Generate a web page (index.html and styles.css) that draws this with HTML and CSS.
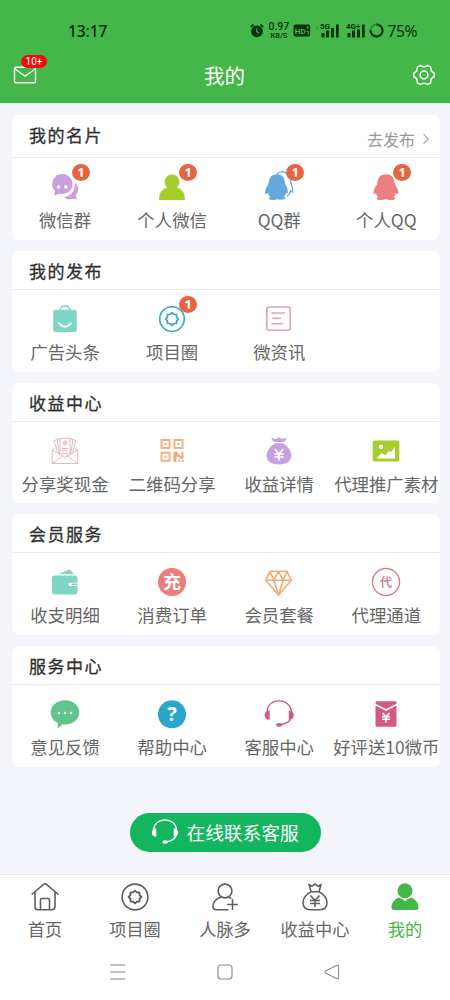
FILE: index.html
```html
<!DOCTYPE html>
<html lang="zh-CN">
<head>
<meta charset="utf-8">
<title>我的</title>
<link rel="stylesheet" href="styles.css">
</head>
<body>
<header class="header">
  <div class="status">
    <span class="time">13:17</span>
    <div class="status-right">
      <svg class="alarm" width="14" height="15" viewBox="0 0 14 15"><circle cx="7" cy="8.4" r="5.9" fill="#06350b"/><path d="M.9 3.900 3.600 1.500M13.100 3.900 10.400 1.500" stroke="#06350b" stroke-width="1.700"/><path d="M6.800 5.500v3l2 1.600" fill="none" stroke="#45b649" stroke-width="1.200"/></svg>
      <span class="speed"><b>0.97</b><b class="unit">KB/S</b></span>
      <svg class="hd" width="18" height="13" viewBox="0 0 18 13"><rect x=".5" y=".5" width="16.600" height="12" rx="1.800" fill="#06350b"/><text x="1.800" y="9.600" class="hd-text">HD</text><path d="M14.700 2v3M13.700 7.500h1.500v3" stroke="#45b649" fill="none"/></svg>
      <svg class="sig5" width="24" height="17" viewBox="0 0 24 17"><text x="4" y="7" class="net-text">5G</text><path d="M1 4v3" stroke="#2c8d31"/><g fill="#06350b"><rect x="5.500" y="11" width="3" height="4.500"/><rect x="10" y="8.500" width="3" height="7"/><rect x="15" y="6" width="3" height="9.500"/><rect x="20" y="2.500" width="2.700" height="13"/></g></svg>
      <svg class="sig4" width="20" height="17" viewBox="0 0 20 17"><text x="0" y="7" class="net-text">4G+</text><g fill="#06350b"><rect x="1.500" y="11" width="3" height="4.500"/><rect x="6" y="8.500" width="3" height="7"/><rect x="11" y="7.500" width="3" height="8"/><rect x="16" y="2.500" width="2.700" height="13"/></g></svg>
      <svg class="ring" width="15" height="15" viewBox="0 0 15 15" fill="none" stroke-width="2"><circle cx="7.500" cy="7.500" r="6" stroke="#2a8b30"/><path d="M7.500 1.500a6 6 0 1 1-6 6" stroke="#06350b"/></svg>
      <span class="battery">75%</span>
    </div>
  </div>
  <div class="titlebar">
    <div class="mail">
      <svg width="24" height="20" viewBox="0 0 24 20" fill="none" stroke="#f3fff3" stroke-width="1.400" stroke-linejoin="round"><rect x="1.500" y="2.300" width="21" height="15.500" rx="1.500"/><path d="m2 4 10 7.300L22 4"/></svg>
      <span class="mail-badge">10+</span>
    </div>
    <h1>我的</h1>
    <svg class="gear" width="24" height="24" viewBox="0 0 24 24" fill="none" stroke="#f3fff3" stroke-width="1.500" stroke-linejoin="round"><path d="M8.500 2.300q3.500 2.800 7 0l3.300 1.900q-.7 4.400 3.500 6v3.600q-4.200 1.600-3.500 6l-3.300 1.900q-3.500-2.800-7 0l-3.300-1.900q.7-4.400-3.500-6v-3.600q4.200-1.600 3.500-6z"/><circle cx="12" cy="12" r="3.900"/></svg>
  </div>
</header>

<main class="main">
  <section class="card card-first">
    <div class="head"><h2>我的名片</h2><a class="more">去发布<svg width="8" height="12" viewBox="0 0 8 12" fill="none" stroke="#aaa" stroke-width="1.100"><path d="m1.500 1 4.700 5-4.700 5"/></svg></a></div>
    <div class="row">
      <div class="item"><div class="icon"><svg viewBox="0 0 28 28"><path d="M24.300 9.500c4 4.500 3.400 9.500.4 12.500l1.300 4.600-4.200-.8c-3.300 1-6.800.5-9-1.800 5.800-.3 11.500-5 11.500-14.500z" fill="#c9a0df"/><path d="M11.800 1a10.300 10 0 1 1-3 19.700L3 22.500l1.200-4.400A10.300 10 0 0 1 11.800 1z" fill="#c9a0df"/><circle cx="7.600" cy="14" r="1.700" fill="#fff"/><circle cx="14.800" cy="14" r="1.700" fill="#fff"/></svg><i class="badge">1</i></div><span>微信群</span></div>
      <div class="item"><div class="icon"><svg viewBox="0 0 28 28" fill="#a5cd2b"><path d="M14 1.500a7.300 7.300 0 0 1 4.600 13c5.500 1.300 8.400 5.500 8.400 12.500H1c0-7 3-11.200 8.500-12.500A7.300 7.300 0 0 1 14 1.500z"/></svg><i class="badge">1</i></div><span>个人微信</span></div>
      <div class="item"><div class="icon"><svg viewBox="0 0 28 28"><path d="M12 1c5-5 13-1 13.600 7.300.4 4 2.600 6.200 2 10.700l-2-1c-.5 3-1.500 4-3.600 5" fill="none" stroke="#67a8dc" stroke-width="1.300"/><path d="M12 1.300c5.800 0 7.700 4 8 9.200 2 3.300 3.500 6.700 2.600 10.300l-1.400-1c-.3 1.600-1 2.800-2.300 3.900 2 1 1.500 2.700-1 2.900-2.300.2-4 .2-5.500-.3-1.600.5-4 .8-6.300.5-2.600-.3-2.700-2-.8-2.900-1.200-1-2-2.200-2.300-3.800L.4 21.300c-1-3.700 1.200-7.300 3.200-10.800C4 5 6.200 1.300 12 1.300z" fill="#67a8dc"/></svg><i class="badge">1</i></div><span>QQ群</span></div>
      <div class="item"><div class="icon"><svg viewBox="0 0 28 28"><path d="M14 1.300c6 0 8.300 4 8.700 9.500 2 3.300 4.400 6.800 3.400 10.500l-2.300-1c-.3 1.400-1 2.500-2.200 3.400 2.300 1 2.200 3-.6 3.200-2.700.3-5 .1-7-1-2 .9-4.400 1.300-7 1-2.800-.3-2.900-2.200-.6-3.200-1.200-.9-2-2-2.300-3.400l-2.300 1c-1-3.700 1.500-7.200 3.500-10.500C5.700 5.300 8 1.300 14 1.300z" fill="#ee7f80"/></svg><i class="badge">1</i></div><span>个人QQ</span></div>
    </div>
  </section>

  <section class="card">
    <div class="head"><h2>我的发布</h2></div>
    <div class="row">
      <div class="item"><div class="icon"><svg viewBox="0 0 28 28"><path d="M9.300 6V5q0-4 4.700-4t4.700 4v1" fill="none" stroke="#7fd6c5" stroke-width="1.600"/><rect x="2.200" y="4.800" width="23.600" height="22.200" rx="2" fill="#7fd6c5"/><path d="M8 18.300q6 6.500 12 0" fill="none" stroke="#fff" stroke-width="1.800" stroke-linecap="round"/></svg></div><span>广告头条</span></div>
      <div class="item"><div class="icon"><svg viewBox="0 0 28 28" fill="none" stroke="#35a5c8"><circle cx="14" cy="14" r="12.300" stroke-width="1.600"/><path d="m14 7.600 1.900 1.800 2.600.1.100 2.600 1.800 1.900-1.800 1.900-.1 2.600-2.600.1-1.900 1.800-1.900-1.800-2.600-.1-.1-2.600L7.600 14l1.800-1.900.1-2.600 2.600-.1z" stroke-width="1.700" stroke-linejoin="round"/></svg><i class="badge">1</i></div><span>项目圈</span></div>
      <div class="item"><div class="icon"><svg viewBox="0 0 28 28" fill="none" stroke="#e8a1bd" stroke-width="1.600"><rect x="1.800" y="2" width="23.400" height="23.200" rx="2.500"/><path d="M7 8h12.500M8 13.200h7.500M7 18.700h10.500" stroke-linecap="round"/></svg></div><span>微资讯</span></div>
    </div>
  </section>

  <section class="card">
    <div class="head"><h2>收益中心</h2></div>
    <div class="row">
      <div class="item"><div class="icon"><svg viewBox="0 0 28 28" fill="#fff" stroke="#e3b1b5" stroke-width=".9"><path d="m3 3.500 5.500-1.500 4 15-6-2zM25 3.500l-5.500-1.500-4 15 6-2z"/><path d="m6 2.500 4-1 3 15-5-2zM22 2.500l-4-1-3 15 5-2z"/><rect x="9" y="1.300" width="10" height="15.500"/><circle cx="14" cy="6" r="2"/><path d="M12.300 6h3.400M14 4.500v3M11 11.500h6M11 15l3-2.300 3 2.300" fill="none"/><path d="m1.200 13 12.800 7.500L26.800 13v13.500H1.200z"/><path d="m1.200 26.500 10.300-7.500M26.800 26.500l-10.300-7.500M1.200 13 4 11M26.800 13 24 11" fill="none"/></svg></div><span>分享奖现金</span></div>
      <div class="item"><div class="icon"><svg viewBox="0 0 28 28"><g fill="none" stroke="#f2b27f" stroke-width="2"><rect x="3.500" y="3" width="8" height="8"/><rect x="16.500" y="3" width="8" height="8"/><rect x="3.500" y="15.800" width="8" height="8"/></g><path d="M6.500 6h2v2h-2zM19.500 6h2v2h-2zM6.500 18.800h2v2h-2zM15.500 14.800h4v2h2v2h2v-4h2v7h-4v-2h-3v5h-3zM20 22.800h2v2h-2zM23.500 22.800h2v2h-2z" fill="#f2a874"/></svg></div><span>二维码分享</span></div>
      <div class="item"><div class="icon"><svg viewBox="0 0 28 28" fill="#c9a0df"><path d="m6.300.8 4 1.200L14 .5 17.700 2l4-1.200q-.8 3.400-3.700 4.300h-8Q7.200 4.200 6.300.8zM10 6.300h8C30 14 29.500 27.500 14 27.500S-2 14 10 6.300z"/><path d="m9.800 12 4.200 5 4.200-5M9.500 17h9M9.500 20h9M14 17v6.500" fill="none" stroke="#fff" stroke-width="1.700"/></svg></div><span>收益详情</span></div>
      <div class="item"><div class="icon"><svg viewBox="0 0 28 28"><rect x=".7" y="3.500" width="26.600" height="21" rx="1.800" fill="#a5cd2b"/><circle cx="9" cy="9.800" r="2.300" fill="#fff"/><path d="m4.500 21.500 4.800-5.500 4 2.200 3.400-4.200 2.300 1L23 9.700v11.800z" fill="#fff"/></svg></div><span>代理推广素材</span></div>
    </div>
  </section>

  <section class="card">
    <div class="head"><h2>会员服务</h2></div>
    <div class="row">
      <div class="item"><div class="icon"><svg viewBox="0 0 28 28" fill="#7fd6c5"><path d="m7.500 6.300 10.300-4.700q1-.5 1.600.4l3.500 4.300zM4 7.500h19.500q3 0 3 3v4.200h-7q-2.300 0-2.300 1.600t2.300 1.600h7V23.500q0 3-3 3H4q-3 0-3-3v-13q0-3 3-3z"/><path d="M20.500 15.500h6v1.600h-6z"/></svg></div><span>收支明细</span></div>
      <div class="item"><div class="icon"><svg viewBox="0 0 28 28"><circle cx="14" cy="14" r="14" fill="#ec7d7e"/><text class="glyph-chong" x="14" y="20.800">充</text></svg></div><span>消费订单</span></div>
      <div class="item"><div class="icon"><svg viewBox="0 0 28 28" fill="none" stroke="#f3ab77" stroke-width="1.600" stroke-linejoin="round"><path d="M5 3.300h17l4.300 9L13.500 27 .7 12.300zM.7 12.300h25.600M5 3.300l3.800 9 4.700-9 4.700 9 3.800-9M8.800 12.300 13.500 27l4.700-14.700"/></svg></div><span>会员套餐</span></div>
      <div class="item"><div class="icon"><svg viewBox="0 0 28 28"><circle cx="14" cy="14" r="13.500" fill="none" stroke="#d98388" stroke-width="1.500"/><text class="glyph-dai" x="14" y="18.700">代</text></svg></div><span>代理通道</span></div>
    </div>
  </section>

  <section class="card">
    <div class="head"><h2>服务中心</h2></div>
    <div class="row">
      <div class="item"><div class="icon"><svg viewBox="0 0 28 28"><path d="M14 .3c8 0 14.300 5 14.300 12S22 24.500 14 24.500q-1.500 0-3-.3-1 2.300-4.500 4l.5-5.200C2.500 21-.3 17.300-.3 12.300-.3 5.300 6 .3 14 .3z" fill="#5fc48d"/><g fill="#fff"><circle cx="8" cy="13" r="1.300"/><circle cx="14" cy="13" r="1.300"/><circle cx="20" cy="13" r="1.300"/></g></svg></div><span>意见反馈</span></div>
      <div class="item"><div class="icon"><svg viewBox="0 0 28 28"><circle cx="14" cy="14.300" r="14" fill="#2ba6cd"/><text class="glyph-help" x="14" y="21">?</text></svg></div><span>帮助中心</span></div>
      <div class="item"><div class="icon"><svg viewBox="0 0 28 28"><path d="M2 13C2 5 7.500.8 14 .8S26.500 5 26.500 13M26 18q-1.500 5-10 6.500" fill="none" stroke="#c85c80" stroke-width="1.300"/><path d="M4.700 10.500v9.300C1.500 20-.3 17.800-.3 15.200s1.800-4.700 5-4.700zM23.800 10.500v9.300c3.200.2 5-2 5-4.600s-1.800-4.700-5-4.700z" fill="#d45b80"/><ellipse cx="14" cy="24.900" rx="3" ry="1.800" fill="#d45b80"/></svg></div><span>客服中心</span></div>
      <div class="item"><div class="icon"><svg viewBox="0 0 28 28"><path d="M5 1.200h18.500q1 0 1 1v1.500L14 9 3.500 3.700V2.200q0-1 1.500-1zM3.500 5.500 14 11l10.500-5.500v19.800q0 1.500-1.500 1.500H5q-1.500 0-1.500-1.500z" fill="#d45b80"/><path d="m10.500 13 3.500 3.800 3.500-3.800M10 16.800h8M10 19.300h8M14 16.500v6" fill="none" stroke="#fff" stroke-width="1.500"/></svg></div><span>好评送10微币</span></div>
    </div>
  </section>

  <button class="cta"><svg width="28" height="26" viewBox="0 0 28 26"><path d="M2.500 11C3 4.500 8 1 14 1s11 3.500 11.500 10M25.300 16q-1.500 5.500-9.300 6.700" fill="none" stroke="#fff" stroke-width="1.300"/><path d="M5.300 9.500v8C2.500 17.800.8 16 .8 13.500s1.700-4 4.500-4zM22.700 9.500v8c2.800.3 4.500-1.500 4.500-4s-1.700-4-4.500-4z" fill="#fff"/><ellipse cx="14" cy="23" rx="2.800" ry="1.700" fill="#fff"/></svg>在线联系客服</button>
</main>

<nav class="tabs">
  <div class="tab"><svg viewBox="0 0 28 28"><path d="M.7 11.500 12.500 1.400q1.500-1 3 0L27.300 11.500M4 9v14.500q0 3.200 3 3.200h14q3 0 3-3.200V9M9.500 26.500V17q0-1.500 1.500-1.500h6q1.500 0 1.500 1.500v9.500"/></svg><span>首页</span></div>
  <div class="tab"><svg viewBox="0 0 28 28"><circle cx="14" cy="14" r="12.900"/><path d="m14 7.600 1.900 1.800 2.600.1.100 2.600 1.800 1.900-1.800 1.900-.1 2.600-2.600.1-1.900 1.800-1.900-1.800-2.600-.1-.1-2.600L7.600 14l1.800-1.900.1-2.600 2.600-.1z" stroke-width="1.900"/></svg><span>项目圈</span></div>
  <div class="tab"><svg viewBox="0 0 28 28"><circle cx="14" cy="8" r="6.900"/><path d="M10.300 14C5.500 15.500 2 19 2 23.500q0 3.200 3.500 3.200h12M16.500 14q2.300.5 3.800 1.500M16 21.500h11M21.500 16v11"/></svg><span>人脉多</span></div>
  <div class="tab"><svg viewBox="0 0 28 28"><path d="m8 1.500 3 1.700L14 .9l3 2.300 3-1.700-2 7.200q8 4.300 8 11 0 7-7.500 7h-9Q2 26.700 2 19.700q0-6.700 8-11zM10 8.700h8M9.500 12.500l4.500 5 4.500-5M9 17.500h10M9 20.500h10M14 17.500v6.500"/></svg><span>收益中心</span></div>
  <div class="tab active"><svg viewBox="0 0 28 28"><circle cx="14" cy="7.700" r="7.500"/><path d="M8 14.500q3 1 6 3.800 3-2.800 6-3.800c4.500 1.500 7.500 5.500 7.500 9.800q0 2.700-2.500 2.700H3Q.5 27 .5 24.300C.5 20 3.500 16 8 14.500z"/></svg><span>我的</span></div>
</nav>
<footer class="sysnav">
  <svg viewBox="0 0 18 18"><path d="M1.200 2h15M1.200 9h15M1.200 16h15"/></svg>
  <svg viewBox="0 0 18 18"><rect x="2" y="2" width="14" height="14" rx="3"/></svg>
  <svg viewBox="0 0 18 18"><path d="M2.500 8.100 14 2.300q1.500-.5 1.500 1v11.400q0 1.500-1.500 1L2.500 9.900q-1.500-.9 0-1.800z"/></svg>
</footer>
</body>
</html>
```

FILE: styles.css
```css
* { box-sizing: border-box; }
body {
  margin: 0;
  width: 450px;
  height: 1000px;
  display: flex;
  flex-direction: column;
  background: #f4f5fa;
  color: #666;
  font-family: "Noto Sans CJK SC", sans-serif;
  overflow: hidden;
}
svg { display: block; overflow: visible; flex: none; }
h1, h2 { margin: 0; font-weight: 400; }

.header { height: 103px; background: #45b649; }
.status {
  height: 47px;
  padding: 14px 33px 0 68px;
  display: flex;
  justify-content: space-between;
  align-items: center;
  color: #06350b;
}
.time { font: 500 15.5px "Noto Sans", sans-serif; letter-spacing: -0.1px; color: #042a08; }
.status-right { display: flex; align-items: center; }
.speed {
  width: 21px;
  margin-left: 4px;
  display: flex;
  flex-direction: column;
  align-items: center;
  font: 10.5px/10px Roboto, sans-serif;
}
.speed b { font-weight: 500; }
.speed .unit { font-size: 7.5px; line-height: 8px; }
.hd { margin-left: 4px; }
.hd-text { font: 700 8px Roboto, sans-serif; fill: #45b649; }
.net-text { font: 700 8px Roboto, sans-serif; fill: #06350b; }
.sig5 { margin-left: 5px; }
.sig4 { margin-left: 6px; }
.ring { margin-left: 3px; }
.battery { margin-left: 3px; font: 15.6px "Noto Sans", sans-serif; letter-spacing: -0.4px; }

.titlebar {
  height: 56px;
  padding: 0 14px 0 13px;
  display: grid;
  grid-template-columns: 24px 1fr 24px;
  align-items: center;
}
.mail { position: relative; }
.mail-badge {
  position: absolute;
  left: 8px;
  top: -10px;
  width: 26px;
  height: 13px;
  border-radius: 7px;
  background: #f20d0d;
  color: #fff;
  font: 10px/13px Roboto, sans-serif;
  text-align: center;
}
.titlebar h1 { font-size: 20.5px; line-height: 30px; color: #fff; text-align: center; }

.main { flex: 1; padding: 12px 10px 0 11.5px; }
.card {
  height: 120.6px;
  margin-bottom: 11px;
  border-radius: 8px;
  background: #fff;
}
.card-first { height: 125.3px; }
.head {
  height: 39px;
  padding: 0 10px 0 17.5px;
  display: flex;
  justify-content: space-between;
  border-bottom: 1px solid #ececee;
}
.card-first .head { height: 43px; }
.head h2 {
  font-size: 17px;
  line-height: 40px;
  letter-spacing: 1.5px;
  color: #303030;
  -webkit-text-stroke: 0.3px #303030;
}
.more {
  display: flex;
  align-items: center;
  gap: 7px;
  padding-top: 5px;
  font-size: 16px;
  color: #999;
}
.row { display: grid; grid-template-columns: repeat(4, 107.1px); padding-top: 15px; }
.item { display: flex; flex-direction: column; align-items: center; gap: 7px; }
.item span { font-size: 17.4px; line-height: 23px; white-space: nowrap; }
.icon { position: relative; width: 28px; height: 28px; }
.icon svg { width: 28px; height: 28px; }
.badge {
  position: absolute;
  left: 21px;
  top: -9px;
  width: 18px;
  height: 17px;
  border-radius: 50%;
  background: #e86340;
  color: #fff;
  font: 700 13px/17px "Noto Sans", sans-serif;
  text-align: center;
}
.glyph-chong { font-size: 18px; font-weight: 700; text-anchor: middle; fill: #fff; }
.glyph-dai { font-size: 12.5px; font-weight: 500; text-anchor: middle; fill: #d6757b; }
.glyph-help { font: 700 20px "Noto Sans", sans-serif; text-anchor: middle; fill: #fff; }

.cta {
  width: 191px;
  height: 39px;
  margin: 46px auto 0 118.5px;
  padding: 0 21px 0 20.5px;
  display: flex;
  align-items: center;
  gap: 8px;
  border: 0;
  border-radius: 20px;
  background: #13b65c;
  color: #fff;
  font: 18.7px/28px "Noto Sans CJK SC", sans-serif;
  white-space: nowrap;
}

.tabs {
  height: 70px;
  padding-top: 8px;
  display: grid;
  grid-template-columns: repeat(5, 1fr);
  background: #fff;
  border-top: 1px solid #e6e8ea;
}
.tab { display: flex; flex-direction: column; align-items: center; gap: 6px; }
.tab svg {
  width: 28px;
  height: 28px;
  fill: none;
  stroke: #606060;
  stroke-width: 1.6;
  stroke-linejoin: round;
}
.tab span { font-size: 17.2px; line-height: 24px; }
.tab.active { color: #45b649; }
.tab.active svg { fill: #45b649; stroke: none; }

.sysnav {
  height: 56px;
  padding: 19px 109px 0;
  display: flex;
  justify-content: space-between;
  background: #fff;
}
.sysnav svg { width: 18px; height: 18px; fill: none; stroke: #888; stroke-width: 1.1; }
```
